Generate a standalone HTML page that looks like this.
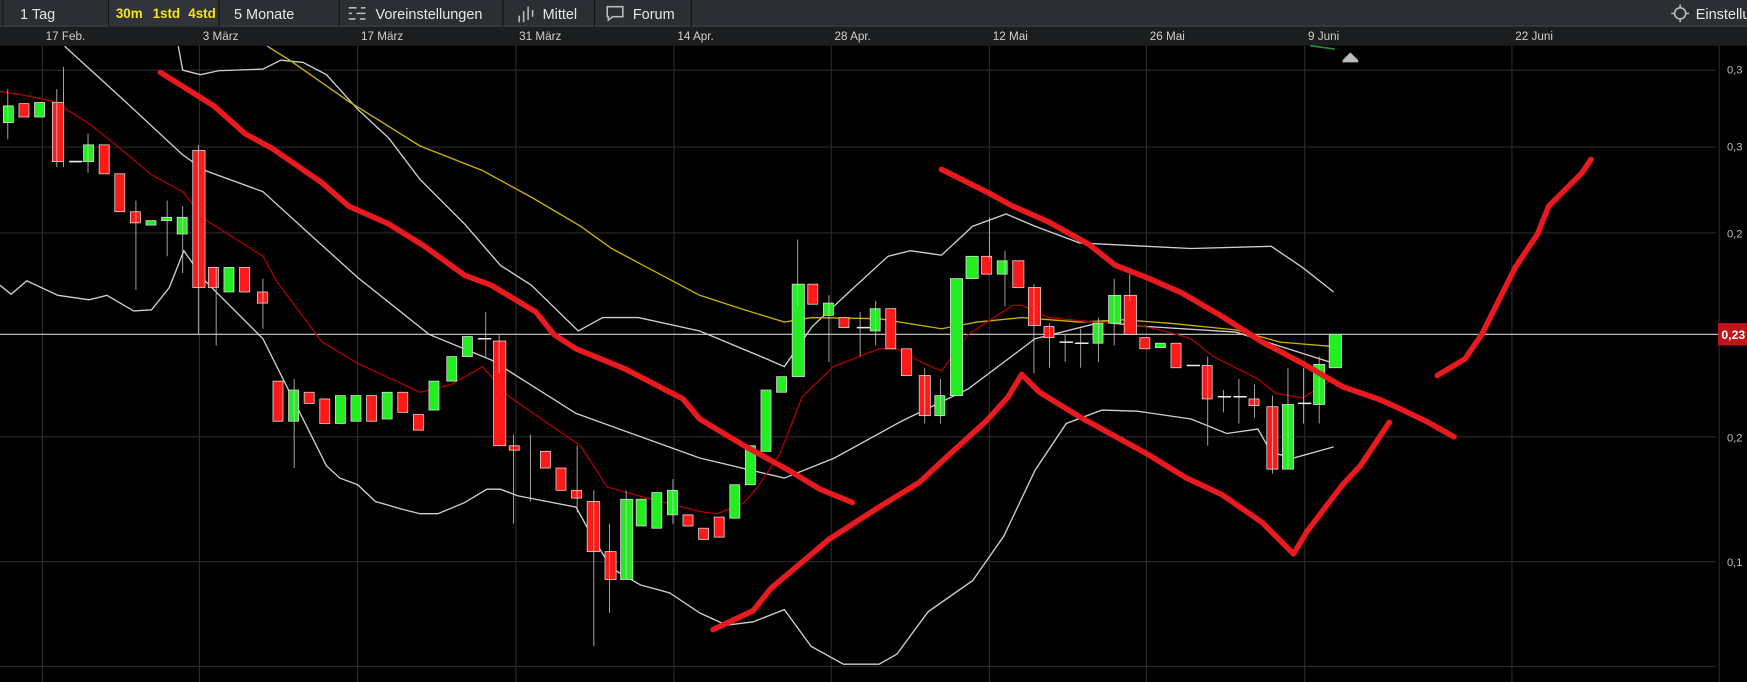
<!DOCTYPE html>
<html><head><meta charset="utf-8"><style>
html,body{margin:0;padding:0;background:#000;width:1747px;height:682px;overflow:hidden}
svg{display:block;position:absolute;left:0;top:0}
text{font-family:"Liberation Sans",sans-serif}
</style></head><body>
<svg width="1747" height="682" viewBox="0 0 1568 612" preserveAspectRatio="none">
<rect width="1568" height="612" fill="#000"/>
<!-- toolbar -->
<rect width="1568" height="24" fill="#2b2e32"/>
<rect y="23" width="1568" height="1" fill="#45494e"/>
<g fill="#111" opacity=".9">
<rect x="2" y="0" width="1" height="24"/><rect x="97" y="0" width="1" height="24"/><rect x="196" y="0" width="1" height="24"/><rect x="304" y="0" width="1" height="24"/><rect x="451" y="0" width="1" height="24"/><rect x="533" y="0" width="1" height="24"/><rect x="620" y="0" width="1" height="24"/>
</g>
<rect x="98" y="0" width="98" height="24" fill="#303338"/>
<g font-size="13" fill="#e6e6e6">
<text x="18" y="17">1 Tag</text>
<text x="210" y="17">5 Monate</text>
<text x="337" y="17">Voreinstellungen</text>
<text x="487" y="17">Mittel</text>
<text x="568" y="17">Forum</text>
<text x="1522" y="17">Einstellu</text>
</g>
<g font-size="12" fill="#f5e61a" font-weight="bold">
<text x="104" y="16">30m</text><text x="137" y="16">1std</text><text x="169" y="16">4std</text>
</g>
<g stroke="#bbb" stroke-width="1.4" fill="none">
<path d="M313 7h7M324 7h4M313 12h3M320 12h8M313 17h6M323 17h5"/>
<path d="M466 14v6M470 10v10M474 6v12M478 9v6" />
<path d="M545 6h14v9h-9l-4 3v-3h-1z"/>
<circle cx="1508" cy="12" r="5"/><path d="M1500 12h3M1513 12h3M1508 4v3M1508 17v3"/>
</g>
<!-- date row -->
<rect y="24" width="1568" height="17" fill="#1b1d1f"/>
<g font-size="10.5" fill="#cfcfcf">
<text x="41" y="36">17 Feb.</text><text x="182" y="36">3 März</text><text x="324" y="36">17 März</text><text x="466" y="36">31 März</text><text x="608" y="36">14 Apr.</text><text x="749" y="36">28 Apr.</text><text x="891" y="36">12 Mai</text><text x="1032" y="36">26 Mai</text><text x="1174" y="36">9 Juni</text><text x="1360" y="36">22 Juni</text>
</g>
<!-- grid -->
<g stroke="#2a2a2a" stroke-width="1">
<path d="M38 41V612M179 41V612M321 41V612M463 41V612M605 41V612M746 41V612M888 41V612M1029 41V612M1171 41V612M1357 41V612"/>
<path d="M0 63H1540M0 132H1540M0 209H1540M0 392H1540M0 504H1540M0 598H1540"/>
<path d="M1543 41V612"/>
</g>
<g font-size="10" fill="#bbb">
<text x="1550" y="66">0,3</text><text x="1550" y="135">0,3</text><text x="1550" y="213">0,2</text><text x="1550" y="396">0,2</text><text x="1550" y="508">0,1</text>
</g>
<path d="M0 300H1543" stroke="#cfcfcf" stroke-width="1"/>
<rect x="1542" y="290" width="26" height="20" fill="#c0141a"/>
<text x="1545" y="304" font-size="11" font-weight="bold" fill="#fff">0,23</text>
<path d="M1205 54l7-7 7 7v2h-14z" fill="#bbb"/>
<path d="M1176 41l22 3" stroke="#1a9a2a" stroke-width="1.5"/>
<!-- bands -->
<g fill="none" stroke-width="1.2">
<path stroke="#cfcfcf" d="M160 41.5L164 63L180 67L196 63.5L236 62L252 54L272 56L293 67L321 98L349 124L377 161L417 201L449 238L477 256L519 297L541 285L573 285L628 297L688 322L704 329L729 293L761 263L797 230L817 225L845 229L873 203L903 192L929 203L969 218L1029 221L1069 223L1141 221L1169 240L1197 262"/>
<path stroke="#cfcfcf" d="M58 41.5L108 87L164 139L184 153L236 172L280 212L321 249L385 300L441 323L517 371L628 411L704 429L749 411L809 378L869 349L929 304L989 289L1029 293L1109 298L1197 326"/>
<path stroke="#cfcfcf" d="M0 256L10 264L24 252L52 265L80 269L96 265L120 279L136 278L152 258L165 225L184 252L236 304L264 360L293 418L305 429L321 435L337 450L361 457L377 461L393 461L417 451L437 439L449 439L465 445L517 455L533 484L549 510L575 525L601 532L628 550L652 561L676 558L704 547L728 580L757 596L789 596L805 587L833 549L873 521L901 481L929 422L957 380L989 368L1021 369L1069 376L1101 389L1129 385L1141 406L1161 411L1197 401"/>
<path stroke="#c8b400" d="M240 41.5L260 54L313 91L377 131L433 153L477 177L521 203L549 223L577 238L628 265L668 278L704 289L729 285L789 286L845 295L877 289L917 285L969 289L1009 287L1049 290L1109 296L1149 307L1197 311"/>
<path stroke="#a00" d="M0 82L24 86L48 91L80 111L104 130L136 157L164 172L184 197L236 230L248 252L289 307L321 326L377 352L405 345L433 329L457 356L521 400L545 437L577 446L628 459L644 461L668 451L680 437L700 407L720 356L748 329L789 313L805 313L829 326L845 333L869 300L909 274L917 274L941 285L981 289L1013 290L1049 298L1069 304L1089 320L1129 340L1145 353L1169 357L1197 340"/>
</g>
<!-- candles -->
<g stroke="#ddd" stroke-width=".7">
<g fill="#22ee22"><rect x="3" y="95" width="9" height="15"/><rect x="31" y="92" width="9" height="13"/><rect x="75" y="130" width="9" height="15"/><rect x="131" y="198" width="9" height="4"/><rect x="145" y="195" width="9" height="3"/><rect x="159" y="195" width="9" height="15"/><rect x="201" y="240" width="9" height="22"/><rect x="259" y="350" width="9" height="28"/><rect x="301" y="355" width="9" height="25"/><rect x="315" y="355" width="9" height="23"/><rect x="343" y="352" width="9" height="24"/><rect x="385" y="342" width="9" height="26"/><rect x="401" y="320" width="9" height="22"/><rect x="415" y="302" width="9" height="18"/><rect x="557" y="448" width="11" height="72"/><rect x="571" y="448" width="9" height="24"/><rect x="585" y="442" width="9" height="32"/><rect x="599" y="440" width="9" height="22"/><rect x="655" y="435" width="9" height="30"/><rect x="669" y="400" width="9" height="35"/><rect x="683" y="350" width="9" height="55"/><rect x="697" y="338" width="9" height="14"/><rect x="711" y="255" width="11" height="83"/><rect x="739" y="272" width="9" height="11"/><rect x="781" y="277" width="9" height="20"/><rect x="839" y="355" width="9" height="18"/><rect x="853" y="250" width="11" height="105"/><rect x="867" y="230" width="11" height="20"/><rect x="895" y="234" width="9" height="12"/><rect x="981" y="290" width="9" height="18"/><rect x="995" y="265" width="11" height="25"/><rect x="1037" y="308" width="9" height="4"/><rect x="1151" y="363" width="10" height="58"/><rect x="1179" y="327" width="10" height="36"/><rect x="1193" y="300" width="11" height="30"/></g>
<g fill="#ff1a1a"><rect x="17" y="93" width="9" height="12"/><rect x="47" y="92" width="10" height="53"/><rect x="89" y="130" width="9" height="26"/><rect x="103" y="156" width="9" height="34"/><rect x="117" y="190" width="9" height="10"/><rect x="173" y="135" width="11" height="123"/><rect x="187" y="240" width="9" height="18"/><rect x="215" y="240" width="9" height="22"/><rect x="231" y="262" width="9" height="10"/><rect x="245" y="342" width="9" height="36"/><rect x="273" y="352" width="9" height="10"/><rect x="287" y="358" width="9" height="22"/><rect x="329" y="355" width="9" height="23"/><rect x="357" y="352" width="9" height="18"/><rect x="371" y="372" width="9" height="14"/><rect x="443" y="306" width="11" height="94"/><rect x="457" y="400" width="9" height="4"/><rect x="485" y="405" width="9" height="15"/><rect x="499" y="420" width="9" height="20"/><rect x="513" y="440" width="9" height="7"/><rect x="527" y="450" width="11" height="45"/><rect x="543" y="495" width="10" height="25"/><rect x="613" y="462" width="9" height="10"/><rect x="627" y="474" width="9" height="10"/><rect x="641" y="464" width="9" height="18"/><rect x="725" y="255" width="9" height="18"/><rect x="753" y="285" width="9" height="9"/><rect x="795" y="277" width="9" height="36"/><rect x="809" y="313" width="9" height="24"/><rect x="825" y="337" width="10" height="36"/><rect x="881" y="230" width="9" height="16"/><rect x="909" y="234" width="10" height="24"/><rect x="923" y="258" width="11" height="34"/><rect x="937" y="293" width="9" height="10"/><rect x="1009" y="265" width="11" height="35"/><rect x="1023" y="303" width="9" height="10"/><rect x="1051" y="308" width="9" height="22"/><rect x="1079" y="328" width="9" height="30"/><rect x="1121" y="358" width="9" height="6"/><rect x="1137" y="365" width="10" height="56"/></g>
<path fill="none" stroke="#ccc" d="M7 80v45M51 80v70M57 60v90M79 120v35M122 180v80M150 180v50M164 185v60M178 130v170M194 240v70M236 250v45M264 340v80M436 280v40M448 300v35M461 390v80M476 390v60M518 400v60M533 440v140M547 470v80M562 440v80M604 430v40M716 215v60M744 265v60M772 280v40M786 270v40M830 330v50M844 340v40M888 195v40M902 225v50M928 255v80M942 290v40M956 300v25M970 295v35M986 285v40M1000 250v60M1014 240v30M1084 320v80M1098 350v20M1112 340v40M1126 345v30M1142 355v70M1156 330v90M1170 330v50M1184 320v60"/>
<path fill="none" stroke="#eee" stroke-width="1.4" d="M62 145h12M429 304h12M769 294h12M951 307h12M965 308h12M1065 328h12M1093 356h12M1107 356h12M1165 362h12"/>
</g>
<!-- hand drawn red lines -->
<g fill="none" stroke="#e8191f" stroke-width="5" stroke-linecap="round" stroke-linejoin="round">
<path d="M144 65L192 95L220 120L244 133L289 164L313 185L349 201L381 221L417 247L441 256L481 280L497 300L517 313L561 331L613 358L628 376L668 400L708 422L736 439L765 451"/>
<path d="M845 152L869 164L889 174L909 185L941 199L977 219L1001 238L1029 249L1061 263L1097 284L1133 307L1169 326L1205 347L1237 358L1257 367L1280 378L1305 392"/>
<path d="M640 565L676 548L692 528L744 484L789 455L825 433L853 407L885 378L905 356L917 336L933 352L969 374L1029 407L1065 429L1097 444L1133 469L1161 497L1173 477L1205 435L1221 418L1247 379"/>
<path d="M1290 337L1315 322L1330 300L1345 270L1360 240L1380 210L1390 185L1405 170L1420 155L1428 143"/>
</g>
</svg>
</body></html>
